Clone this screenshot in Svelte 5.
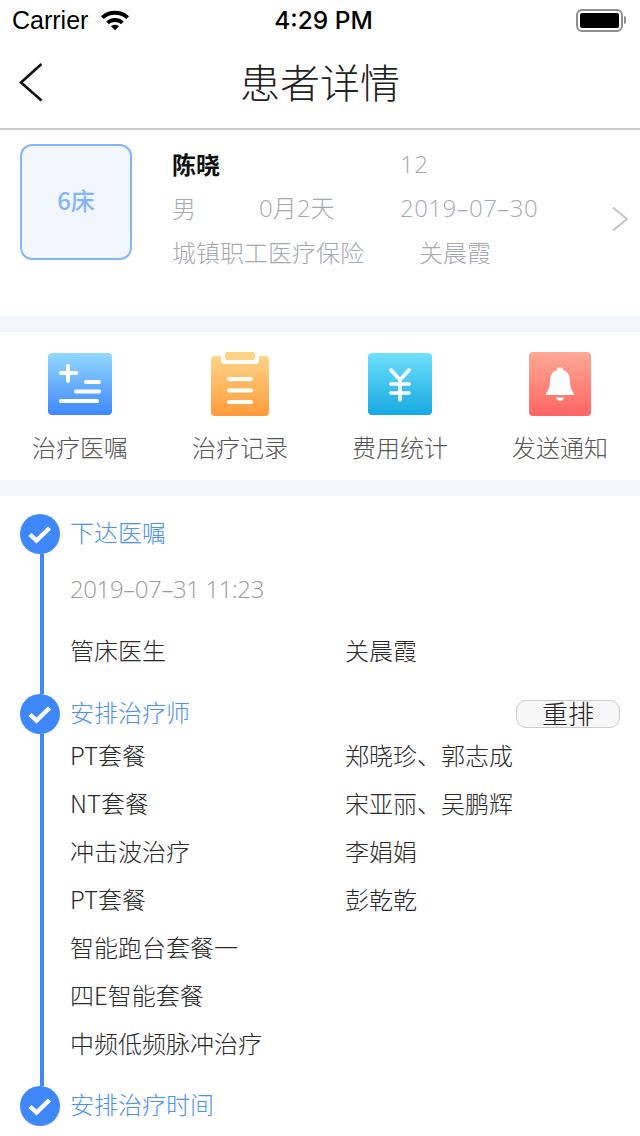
<script>
  const actions = [
    { label: "治疗医嘱", kind: "order" },
    { label: "治疗记录", kind: "record" },
    { label: "费用统计", kind: "fee" },
    { label: "发送通知", kind: "notice" }
  ];

  const therapists = [
    ["PT套餐", "郑晓珍、郭志成"],
    ["NT套餐", "宋亚丽、吴鹏辉"],
    ["冲击波治疗", "李娟娟"],
    ["PT套餐", "彭乾乾"],
    ["智能跑台套餐一", ""],
    ["四E智能套餐", ""],
    ["中频低频脉冲治疗", ""]
  ];
</script>

{#snippet dot()}
  <svg class="dot" width="40" height="40" viewBox="0 0 40 40">
    <circle cx="20" cy="20" r="20" fill="#3e88fb" />
    <path d="M10 20.500l6.500 6 13-12.500" fill="none" stroke="#fff" stroke-width="4.400" />
  </svg>
{/snippet}

<div class="page">
  <div class="status">
    <div class="status-left">
      <span>Carrier</span>
      <svg width="30" height="22" viewBox="0 0 30 22">
        <path d="M1 7.200C8.600 -.1 21.400 -.1 29 7.200l-2.600 2.800C20.200 4.200 9.800 4.200 3.600 10z" fill="#000" />
        <path d="M6.200 12.400c5-4.600 12.600-4.600 17.600 0l-2.700 2.800c-3.500-3.100-8.700-3.100-12.200 0z" fill="#000" />
        <path d="M11 17.300c2.400-2 5.600-2 8 0l-4 4z" fill="#000" />
      </svg>
    </div>
    <span class="time">4:29 PM</span>
    <div class="battery">
      <div class="battery-body"><div class="battery-fill"></div></div>
      <div class="battery-tip"></div>
    </div>
  </div>

  <div class="nav">
    <svg class="back" width="26" height="40" viewBox="0 0 26 40">
      <path d="M23.500 2L3 20.500 23.500 38.500" fill="none" stroke="#111" stroke-width="2.600" />
    </svg>
    <h1>患者详情</h1>
  </div>

  <div class="patient">
    <div class="bed">6床</div>
    <div class="info">
      <div class="info-row">
        <strong class="name">陈晓</strong>
        <span class="age num">12</span>
      </div>
      <div class="info-row">
        <span class="sex">男</span>
        <span class="days">0月2天</span>
        <span class="num">2019–07–30</span>
      </div>
      <div class="info-row">
        <span class="insurance">城镇职工医疗保险</span>
        <span>关晨霞</span>
      </div>
    </div>
    <svg class="chevron" width="18" height="26" viewBox="0 0 18 26">
      <path d="M2 1.500l14 11.500-14 11.500" fill="none" stroke="#c4c4c4" stroke-width="2" />
    </svg>
  </div>

  <div class="actions">
    {#each actions as action}
      <div class="action">
        <div class="action-icon">
          {#if action.kind === "order"}
            <svg width="64" height="62" viewBox="0 0 64 62">
              <defs>
                <linearGradient id="g-order" x1="0" y1="0" x2="0" y2="1">
                  <stop offset="0" stop-color="#92d8ff" />
                  <stop offset="1" stop-color="#3f88fd" />
                </linearGradient>
              </defs>
              <rect width="64" height="62" rx="4" fill="url(#g-order)" />
              <g stroke="#fff" stroke-width="4" stroke-linecap="round" fill="none">
                <path d="M13 20h15M20 13v15" />
                <path d="M38 29h13M28 38.500h23M13 48h36" />
              </g>
            </svg>
          {:else if action.kind === "record"}
            <svg width="58" height="64" viewBox="0 0 58 64">
              <defs>
                <linearGradient id="g-record" x1="0" y1="0" x2="0" y2="1">
                  <stop offset="0" stop-color="#ffd487" />
                  <stop offset="1" stop-color="#ff9b3b" />
                </linearGradient>
              </defs>
              <path d="M4 4h6v4a4 4 0 0 0 4 4h30a4 4 0 0 0 4-4V4h6a4 4 0 0 1 4 4v52a4 4 0 0 1-4 4H4a4 4 0 0 1-4-4V8a4 4 0 0 1 4-4z" fill="url(#g-record)" />
              <rect x="14" y="0" width="30" height="8" rx="2.500" fill="#ffd487" />
              <g stroke="#fff" stroke-width="4" stroke-linecap="round">
                <path d="M18 27h22M18 38.500h22M18 50h22" />
              </g>
            </svg>
          {:else if action.kind === "fee"}
            <svg width="64" height="62" viewBox="0 0 64 62">
              <defs>
                <linearGradient id="g-fee" x1="0" y1="0" x2="0" y2="1">
                  <stop offset="0" stop-color="#70e0fd" />
                  <stop offset="1" stop-color="#16a8e0" />
                </linearGradient>
              </defs>
              <rect width="64" height="62" rx="4" fill="url(#g-fee)" />
              <g stroke="#fff" stroke-width="3.600" stroke-linecap="round" fill="none">
                <path d="M23 17l9 10 9-10M32 27v20M23 31h18M23 40h18" />
              </g>
            </svg>
          {:else}
            <svg width="62" height="64" viewBox="0 0 62 64">
              <defs>
                <linearGradient id="g-notice" x1="0" y1="0" x2="0" y2="1">
                  <stop offset="0" stop-color="#ffaa95" />
                  <stop offset="1" stop-color="#ff6464" />
                </linearGradient>
              </defs>
              <rect width="62" height="64" rx="4" fill="url(#g-notice)" />
              <path d="M31 15c-1.800 0-3 1.200-3 3C23 19.500 21 24 21 30c0 6-2.500 9-4 12v1h28v-1c-1.500-3-4-6-4-12 0-6-2-10.500-7-12 0-1.800-1.200-3-3-3z" fill="#fff" />
              <path d="M27 45.500h8c-.5 2-2 3.500-4 3.500s-3.500-1.500-4-3.500z" fill="#fff" />
            </svg>
          {/if}
        </div>
        <span class="action-label">{action.label}</span>
      </div>
    {/each}
  </div>

  <div class="timeline">
    <div class="step step-one">
      <div class="rail">{@render dot()}<div class="rail-line"></div></div>
      <div class="step-body">
        <div class="step-title">下达医嘱</div>
        <div class="date">2019–07–31 11:23</div>
        <div class="row doctor"><span>管床医生</span><span>关晨霞</span></div>
      </div>
    </div>

    <div class="step step-two">
      <div class="rail">{@render dot()}<div class="rail-line"></div></div>
      <div class="step-body">
        <div class="step-title with-button">
          安排治疗师
          <button>重排</button>
        </div>
        <div class="rows">
          {#each therapists as [item, names]}
            <div class="row"><span>{item}</span><span>{names}</span></div>
          {/each}
        </div>
      </div>
    </div>

    <div class="step">
      <div class="rail">{@render dot()}</div>
      <div class="step-body">
        <div class="step-title">安排治疗时间</div>
      </div>
    </div>
  </div>
</div>

<style>
  :global(body) {
    margin: 0;
    background: #fff;
  }

  * {
    box-sizing: border-box;
    font-family: "Noto Sans CJK SC", "Liberation Sans", sans-serif;
  }

  .page {
    width: 640px;
    height: 1136px;
    overflow: hidden;
    background: #fff;
  }

  .status {
    height: 40px;
    display: flex;
    align-items: center;
    justify-content: space-between;
    padding: 0 14px 0 12px;
    position: relative;
    font-size: 25px;
    color: #000;
  }

  .status span {
    font-family: "Liberation Sans", sans-serif;
  }

  .status-left {
    display: flex;
    align-items: center;
    gap: 12px;
  }

  .status .time {
    position: absolute;
    left: 7px;
    right: 0;
    text-align: center;
    font-family: Inter, "Liberation Sans", sans-serif;
    font-size: 24.5px;
    font-weight: 500;
  }

  .battery {
    display: flex;
    align-items: center;
    gap: 1px;
  }

  .battery-body {
    width: 47px;
    height: 23px;
    border: 2px solid #8e8e8e;
    border-radius: 6px;
    padding: 2px;
  }

  .battery-fill {
    height: 100%;
    background: #000;
    border-radius: 2px;
  }

  .battery-tip {
    width: 2px;
    height: 8px;
    background: #8e8e8e;
    border-radius: 0 2px 2px 0;
  }

  .nav {
    height: 90px;
    border-bottom: 2px solid #c9ccd6;
    display: flex;
    align-items: center;
    justify-content: center;
    position: relative;
    padding-bottom: 7px;
  }

  .nav h1 {
    margin: 0;
    font-size: 40px;
    font-weight: 300;
    line-height: 1;
    color: #222;
  }

  .back {
    position: absolute;
    left: 18px;
    top: 22px;
  }

  .patient {
    height: 202px;
    display: flex;
    align-items: flex-start;
    padding: 14px 0 0 20px;
    border-bottom: 16px solid #f3f6fb;
    position: relative;
  }

  .bed {
    width: 112px;
    height: 116px;
    border: 2px solid #84b4fb;
    border-radius: 12px;
    background: #f2f6ff;
    color: #84b4fb;
    font-size: 24px;
    font-weight: 500;
    display: flex;
    align-items: center;
    justify-content: center;
    padding-bottom: 6px;
  }

  .info {
    margin-left: 40px;
    margin-top: -2px;
  }

  .info-row {
    height: 44px;
    display: flex;
    align-items: center;
    font-size: 24px;
    color: #a6a9af;
  }

  .info-row span {
    line-height: 1;
    font-weight: 300;
  }

  .info-row .num {
    font-family: "Open Sans", sans-serif;
    margin-left: 1px;
    letter-spacing: 0.45px;
  }

  .name {
    width: 227px;
    color: #111;
    font-weight: 700;
    line-height: 1;
  }

  .sex {
    width: 87px;
  }

  .info-row .days {
    width: 140px;
    font-family: "Open Sans", "Noto Sans CJK SC", sans-serif;
  }

  .insurance {
    width: 247px;
  }

  .chevron {
    position: absolute;
    left: 611px;
    top: 76px;
  }

  .actions {
    height: 164px;
    display: grid;
    grid-template-columns: repeat(4, 160px);
    border-bottom: 16px solid #f3f6fb;
    padding-top: 20px;
  }

  .action {
    display: flex;
    flex-direction: column;
    align-items: center;
  }

  .action-icon {
    height: 64px;
    display: flex;
    align-items: center;
    justify-content: center;
  }

  .action-icon svg {
    display: block;
  }

  .action-label {
    margin-top: 16px;
    font-size: 24px;
    line-height: 30px;
    color: #555;
    font-weight: 300;
  }

  .timeline {
    padding-top: 18px;
  }

  .step {
    display: flex;
    padding: 0 20px;
  }

  .step-one {
    height: 180px;
  }

  .step-two {
    height: 392px;
  }

  .rail {
    width: 40px;
    display: flex;
    flex-direction: column;
    align-items: center;
    flex-shrink: 0;
  }

  .dot {
    display: block;
    flex-shrink: 0;
  }

  .rail-line {
    width: 4px;
    flex: 1;
    margin-left: 4px;
    background: #3e88fb;
  }

  .step-body {
    flex: 1;
    margin-left: 10px;
  }

  .step-title {
    height: 40px;
    display: flex;
    align-items: center;
    justify-content: space-between;
    padding-bottom: 5px;
    font-size: 24px;
    color: #4a90f8;
    font-weight: 300;
  }

  .step-title button {
    width: 104px;
    height: 28px;
    margin-top: 5px;
    padding: 0 0 5px;
    border: 1px solid #ccc;
    border-radius: 10px;
    background: #f7f7f7;
    font-size: 26px;
    line-height: 24px;
    color: #222;
    font-weight: 300;
  }

  .date {
    margin-top: 16px;
    height: 40px;
    display: flex;
    align-items: center;
    padding-bottom: 3px;
    font-family: "Open Sans", sans-serif;
    font-size: 24px;
    font-weight: 300;
    letter-spacing: -0.4px;
    color: #999;
  }

  .rows {
    margin-top: -2px;
  }

  .row {
    height: 48px;
    display: grid;
    grid-template-columns: 275px 1fr;
    align-items: center;
    padding-bottom: 4px;
    font-size: 24px;
    color: #2a2a2a;
    font-weight: 300;
  }

  .row span {
    font-weight: 300;
  }

  .doctor {
    margin-top: 17px;
  }
</style>
